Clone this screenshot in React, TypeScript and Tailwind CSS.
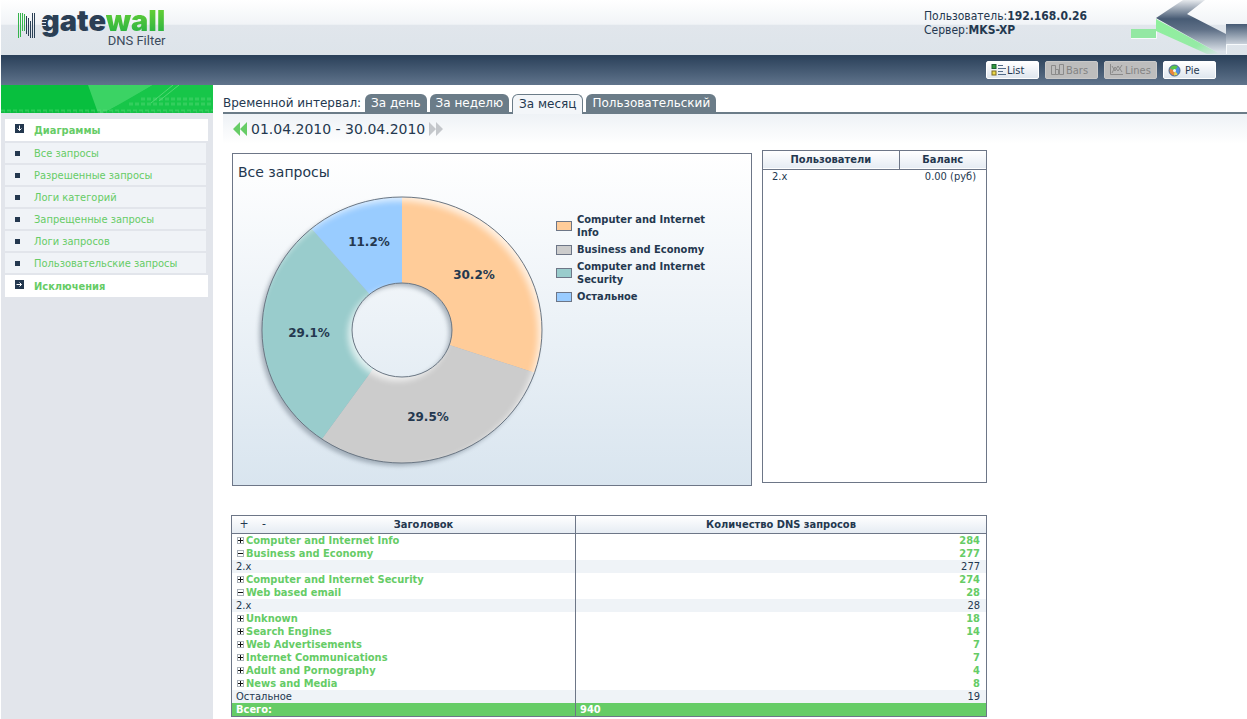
const navItems = [
  "Все запросы",
  "Разрешенные запросы",
  "Логи категорий",
  "Запрещенные запросы",
  "Логи запросов",
  "Пользовательские запросы",
];

const tabs = ["За день", "За неделю", "За месяц", "Пользовательский"];
const activeTab = "За месяц";

const slices = [
  { label: "Computer and Internet Info", share: 30.2, color: "#ffcc99", x: 241, y: 125 },
  { label: "Business and Economy", share: 29.5, color: "#cccccc", x: 195, y: 267 },
  { label: "Computer and Internet Security", share: 29.1, color: "#99cccc", x: 76, y: 183 },
  { label: "Остальное", share: 11.2, color: "#99ccff", x: 136, y: 92 },
];

type Row = { title: string; count: number; kind: "closed" | "open" | "plain" };

const rows: Row[] = [
  { title: "Computer and Internet Info", count: 284, kind: "closed" },
  { title: "Business and Economy", count: 277, kind: "open" },
  { title: "2.x", count: 277, kind: "plain" },
  { title: "Computer and Internet Security", count: 274, kind: "closed" },
  { title: "Web based email", count: 28, kind: "open" },
  { title: "2.x", count: 28, kind: "plain" },
  { title: "Unknown", count: 18, kind: "closed" },
  { title: "Search Engines", count: 14, kind: "closed" },
  { title: "Web Advertisements", count: 7, kind: "closed" },
  { title: "Internet Communications", count: 7, kind: "closed" },
  { title: "Adult and Pornography", count: 4, kind: "closed" },
  { title: "News and Media", count: 8, kind: "closed" },
  { title: "Остальное", count: 19, kind: "plain" },
];

function Logo() {
  return (
    <div className="flex items-start pt-2 pl-4">
      <svg width="20" height="30" viewBox="0 0 20 30" className="mt-1">
        <path d="M1.500 1v25M3.500 1v24M5.500 1v18M7.500 2v17" stroke="#35b44c" />
        <path d="M9.500 4v18M11.500 6v18M13.500 9v17M15.500 1v25M17.500 1v25" stroke="#2b4156" />
      </svg>
      <div className="ml-1 flex flex-col items-end">
        <div className="relative font-[Inter,sans-serif] text-[29px] leading-[26px] font-black">
          <span className="text-[#2b3f55]">gate</span>
          <span className="bg-linear-to-b from-[#6fd62f] to-[#0fae43] bg-clip-text text-transparent">wall</span>
          {/* speed lines across the g */}
          <svg width="8" height="10" viewBox="0 0 8 10" className="absolute top-[10px] left-0">
            <path d="M0 1.500h6M0 4.500h5M0 7.500h5" stroke="#e9edf1" />
          </svg>
        </div>
        <div className="font-[Roboto,sans-serif] text-[13px] leading-[14px] text-[#3b4a5c]">DNS Filter</div>
      </div>
    </div>
  );
}

function HeaderArt() {
  return (
    <svg width="120" height="54" viewBox="0 0 120 54">
      <defs>
        <linearGradient id="arrowDark" gradientUnits="userSpaceOnUse" x1="50" y1="0" x2="50" y2="54">
          <stop offset="0" stopColor="#e6e9ed" />
          <stop offset="0.350" stopColor="#475b74" />
          <stop offset="0.550" stopColor="#5f7087" />
          <stop offset="0.950" stopColor="#d9e0e7" />
        </linearGradient>
        <linearGradient id="arrowBlock" x1="0" y1="0" x2="0" y2="1">
          <stop offset="0" stopColor="#465a74" />
          <stop offset="1" stopColor="#c9d1da" />
        </linearGradient>
        <linearGradient id="arrowGreen" x1="0" y1="0" x2="1" y2="1">
          <stop offset="0" stopColor="#8ef09c" />
          <stop offset="0.700" stopColor="#95eba5" />
          <stop offset="1" stopColor="#dbe2e9" />
        </linearGradient>
      </defs>
      <path d="M4 29h25v9H4z" fill="#93e8a3" />
      <path d="M4 38.500h25.500V29" fill="none" stroke="#f7fafc" />
      <path d="M29 18L56 0H78L60 14L99 34V54H93z" fill="url(#arrowDark)" />
      <path d="M29 19V31L80 54H93z" fill="url(#arrowGreen)" />
      <path d="M99 24h21v20H99z" fill="url(#arrowBlock)" />
      <path d="M99.500 54V44.500H120" fill="none" stroke="#f7fafc" />
    </svg>
  );
}

function ListIcon() {
  return (
    <svg width="16" height="12" viewBox="0 0 16 12">
      <rect x="1" y="0.500" width="4" height="4" fill="#2f9c3c" stroke="#1f5d35" />
      <rect x="1" y="7" width="4" height="4" fill="#e9d84b" stroke="#7d6a20" />
      <path d="M7 1.500h5M7 4.500h8M7 7.500h5M7 10.500h8" stroke="#516b88" />
    </svg>
  );
}

function BarsIcon() {
  return (
    <svg width="16" height="12" viewBox="0 0 16 12" fill="none" stroke="#8b8b8b">
      <path d="M1.500 1.500h4v9h-4zM5.500 5.500h3v5h-3zM9.500 0.500h4v10h-4z" />
    </svg>
  );
}

function LinesIcon() {
  return (
    <svg width="16" height="12" viewBox="0 0 16 12" fill="none" stroke="#8b8b8b">
      <path d="M1.500 0v10.500H14M3 2l3 5 3-5 4 6M3 9l3-6 3 4 4-6" />
    </svg>
  );
}

function PieIcon() {
  return (
    <svg width="17" height="13" viewBox="0 0 17 13">
      <circle cx="6.500" cy="6.500" r="5.500" fill="#4c8fe0" />
      <path d="M6.500 6.500L1.500 4A5.500 5.500 0 0 1 10 2.500z" fill="#58c746" />
      <path d="M6.500 6.500L1.500 4.500A5.500 5.500 0 0 0 6 12z" fill="#e8843c" />
      <path d="M6.500 6.500L6 12a5.500 5.500 0 0 0 4-1.500z" fill="#e8d64c" />
      <circle cx="6.500" cy="6.500" r="5.500" fill="none" stroke="#4a6a94" />
      <circle cx="6.500" cy="6.500" r="1.500" fill="#f3f6f9" />
    </svg>
  );
}

const views = [
  { name: "List", Icon: ListIcon, enabled: true },
  { name: "Bars", Icon: BarsIcon, enabled: false },
  { name: "Lines", Icon: LinesIcon, enabled: false },
  { name: "Pie", Icon: PieIcon, enabled: true },
];

function Banner() {
  return (
    <svg width="100%" height="28" viewBox="0 0 212 28" preserveAspectRatio="none" className="block">
      <rect width="212" height="28" fill="#08bf3e" />
      <path d="M87 0h65l-30 18-20 10H97z" fill="#3bd364" />
      <path d="M103 28L152 0h60v28z" fill="#17c649" />
      <path d="M150 18l22-18M158 16l20-16" stroke="#52d873" fill="none" />
      <path d="M128 19h84M140 14h72M0 26h212" stroke="#5edb7c" strokeDasharray="4 2" strokeWidth="3" opacity="0.400" />
      <path d="M0 27h212" stroke="#079a35" strokeDasharray="3 3" opacity="0.600" />
    </svg>
  );
}

function Section({ title, open }: { title: string; open: boolean }) {
  return (
    <a href="#" className="flex h-[22px] items-center bg-white pl-[10px] font-bold text-[#66cc66]">
      <svg width="9" height="9" viewBox="0 0 9 9" className="mb-1">
        <rect width="9" height="9" fill="#24384f" />
        <path d={open ? "M4.500 1.500v5M2.500 4.500l2 2 2-2" : "M1.500 4.500h5M4.500 2.500l2 2-2 2"} fill="none" stroke="#fff" />
      </svg>
      <span className="ml-[10px]">{title}</span>
    </a>
  );
}

// The ring is slightly flattened: rx 140 / ry 133 outside, rx 50 / ry 47 inside.
function slicePath(from: number, to: number) {
  const point = (t: number, rx: number, ry: number) => {
    const a = t * 2 * Math.PI;
    return `${(169 + rx * Math.sin(a)).toFixed(2)} ${(176 - ry * Math.cos(a)).toFixed(2)}`;
  };
  return `M${point(from, 140, 133)}A140 133 0 0 1 ${point(to, 140, 133)}L${point(to, 50, 47)}A50 47 0 0 0 ${point(from, 50, 47)}Z`;
}

const ring =
  "M169 43A140 133 0 1 1 168.990 43ZM169 129A50 47 0 1 0 169.010 129Z";

function Chart() {
  let start = 0;
  return (
    <svg width="318" height="331" viewBox="0 0 318 331" className="shrink-0">
      <defs>
        <filter id="soft" x="-20%" y="-20%" width="140%" height="140%">
          <feGaussianBlur stdDeviation="2" />
        </filter>
        <filter id="glow" x="-20%" y="-20%" width="140%" height="140%">
          <feGaussianBlur stdDeviation="3" />
        </filter>
        <clipPath id="ringClip">
          <path d={ring} clipRule="evenodd" />
        </clipPath>
      </defs>
      <path d={ring} fillRule="evenodd" fill="#5b6977" opacity="0.450" filter="url(#soft)" transform="translate(-3 3)" />
      {slices.map((s) => {
        const from = start / 100;
        start += s.share;
        return <path key={s.label} d={slicePath(from, start / 100)} fill={s.color} />;
      })}
      {/* light edge from the upper right */}
      <g clipPath="url(#ringClip)">
        <path
          d={"M-60 -60H400V400H-60Z" + ring}
          fillRule="evenodd"
          fill="#fff"
          opacity="0.700"
          filter="url(#glow)"
          transform="translate(-4 4)"
        />
      </g>
      <path d={ring} fill="none" stroke="#6b7784" />
      {slices.map((s) => (
        <text
          key={s.label}
          x={s.x}
          y={s.y}
          textAnchor="middle"
          className="fill-[#24384f] font-['DejaVu_Sans',sans-serif] text-[12px] font-bold"
        >
          {s.share}%
        </text>
      ))}
    </svg>
  );
}

function Toggle({ open }: { open: boolean }) {
  return (
    <svg width="7" height="7" viewBox="0 0 7 7">
      <rect x="0.500" y="0.500" width="6" height="6" fill="#fff" stroke="#a9b0b8" />
      <path d={open ? "M1 3.500h5" : "M1 3.500h5M3.500 1v5"} stroke="#111" />
    </svg>
  );
}

export default function App() {
  return (
    <div className="flex min-h-screen flex-col bg-white pl-px font-['DejaVu_Sans_Condensed','DejaVu_Sans',sans-serif] text-[11px] leading-[13px] text-[#24384f]">
      <header className="flex h-[55px] justify-between overflow-hidden bg-[linear-gradient(#ffffff_0%,#f1f4f7_44%,#e1e6ec_46%,#dde4ea_100%)]">
        <Logo />
        <div className="flex">
          <div className="w-[203px] pt-[9px] text-[12px] leading-[14px]">
            <div>
              Пользователь:<b>192.168.0.26</b>
            </div>
            <div>
              Сервер:<b>MKS-XP</b>
            </div>
          </div>
          <HeaderArt />
        </div>
      </header>

      <div className="flex h-[30px] items-center justify-end gap-[6px] bg-linear-to-b from-[#2a4059] to-[#60748c] pr-[31px]">
        {views.map(({ name, Icon, enabled }) => (
          <button
            key={name}
            disabled={!enabled}
            className={`flex h-[18px] w-[53px] items-center rounded-[2px] border pl-1 ${
              enabled
                ? "border-white bg-linear-to-b from-white to-[#dfe6ee] text-[#24384f]"
                : "border-[#c9c9c9] bg-[#bdbdbd] text-[#848484]"
            }`}
          >
            <Icon />
            {name}
          </button>
        ))}
      </div>

      <div className="flex flex-1">
        <aside className="w-[212px] shrink-0 bg-[#e2e5eb]">
          <Banner />
          <nav className="pt-[6px] pr-[5px] pl-1">
            <Section title="Диаграммы" open />
            <ul className="mr-[2px] mb-[2px]">
              {navItems.map((item) => (
                <li key={item} className="mt-[2px] bg-[#f0f3f7]">
                  <a href="#" className="flex h-5 items-center pl-[10px] text-[#66cc66]">
                    <span className="mr-[14px] h-[5px] w-[5px] bg-[#24384f]" />
                    {item}
                  </a>
                </li>
              ))}
            </ul>
            <Section title="Исключения" open={false} />
          </nav>
        </aside>

        <main className="min-w-0 flex-1 bg-white pl-[10px]">
          <div className="flex h-[29px] items-end border-b-2 border-[#6b7c88] font-['DejaVu_Sans',sans-serif] text-[12px]">
            <div className="pb-[2px] leading-[14px]">Временной интервал:</div>
            <div className="ml-1 flex gap-[3px]">
              {tabs.map((tab) => (
                <button
                  key={tab}
                  className={`rounded-t-[6px] px-[6px] ${
                    tab === activeTab
                      ? "-mb-[2px] h-5 border border-b-0 border-[#6b7c88] bg-[#f3f6f9] pb-[2px] leading-4"
                      : "h-[18px] bg-[#6b7c88] leading-[18px] text-white"
                  }`}
                >
                  {tab}
                </button>
              ))}
            </div>
          </div>

          <div className="flex h-[30px] items-center gap-1 bg-linear-to-b from-[#eef2f6] to-white pl-[10px] font-['DejaVu_Sans',sans-serif] text-[14px]">
            <button aria-label="Назад">
              <svg width="14" height="14" viewBox="0 0 14 14" className="fill-[#66cc66]">
                <path d="M7 0v14L0 7zM14 0v14L7 7z" />
              </svg>
            </button>
            01.04.2010 - 30.04.2010
            <button aria-label="Вперёд">
              <svg width="14" height="14" viewBox="0 0 14 14" className="fill-[#c4c7cb]">
                <path d="M0 0v14l7-7zM7 0v14l7-7z" />
              </svg>
            </button>
          </div>

          <div className="ml-[9px] flex max-w-[755px] gap-[10px] pt-[6px]">
            <section className="mt-[3px] h-[333px] flex-1 border border-[#6d7687] bg-linear-to-b from-white to-[#d9e5ef]">
              <div className="flex">
                <div className="grid">
                  <h2 className="col-start-1 row-start-1 pt-[10px] pl-[5px] font-['DejaVu_Sans',sans-serif] text-[14px] leading-4">
                    Все запросы
                  </h2>
                  <div className="col-start-1 row-start-1">
                    <Chart />
                  </div>
                </div>
                <ul className="flex w-[170px] flex-col gap-1 pt-[59px] pl-[5px] font-bold">
                  {slices.map((s) => (
                    <li key={s.label} className="flex items-center gap-[5px]">
                      <span className="h-[10px] w-4 shrink-0 border border-[#6d7687]" style={{ backgroundColor: s.color }} />
                      {s.label}
                    </li>
                  ))}
                </ul>
              </div>
            </section>

            <section className="h-[333px] w-[225px] border border-[#6d7687]">
              <table className="w-full">
                <thead>
                  <tr className="h-[18px] border-b border-[#6d7687] bg-linear-to-b from-white to-[#e6ecf3]">
                    <th className="border-r border-[#6d7687]">Пользователи</th>
                    <th className="w-[87px]">Баланс</th>
                  </tr>
                </thead>
                <tbody>
                  <tr>
                    <td className="pl-[9px]">2.x</td>
                    <td className="pr-[10px] text-right">0.00 (руб)</td>
                  </tr>
                </tbody>
              </table>
            </section>
          </div>

          <table className="mt-[29px] ml-[8px] w-full max-w-[756px] table-fixed border-collapse border border-[#6d7687]">
            <thead>
              <tr className="h-[18px] border-b border-[#6d7687] bg-linear-to-b from-white to-[#e6ecf3]">
                <th className="w-[344px] border-r border-[#6d7687]">
                  <div className="flex items-center pl-1">
                    <button className="w-4 text-[12px] font-normal">+</button>
                    <button className="ml-1 w-4 text-[12px] font-normal">-</button>
                    <span className="flex-1 text-center">Заголовок</span>
                  </div>
                </th>
                <th>Количество DNS запросов</th>
              </tr>
            </thead>
            <tbody>
              {rows.map((row, i) => (
                <tr key={i} className={row.kind === "plain" ? "bg-[#eff3f7]" : "font-bold text-[#66cc66]"}>
                  <td className="border-r border-[#6d7687] pl-1">
                    {row.kind === "plain" ? (
                      row.title
                    ) : (
                      <button className="flex items-center gap-[2px] pl-px">
                        <Toggle open={row.kind === "open"} />
                        {row.title}
                      </button>
                    )}
                  </td>
                  <td className="pr-[6px] text-right">{row.count}</td>
                </tr>
              ))}
            </tbody>
            <tfoot>
              <tr className="bg-[#66cc66] font-bold text-white">
                <td className="border-r border-[#6d7687] pl-1">Всего:</td>
                <td className="pl-1">940</td>
              </tr>
            </tfoot>
          </table>
        </main>
      </div>
    </div>
  );
}
